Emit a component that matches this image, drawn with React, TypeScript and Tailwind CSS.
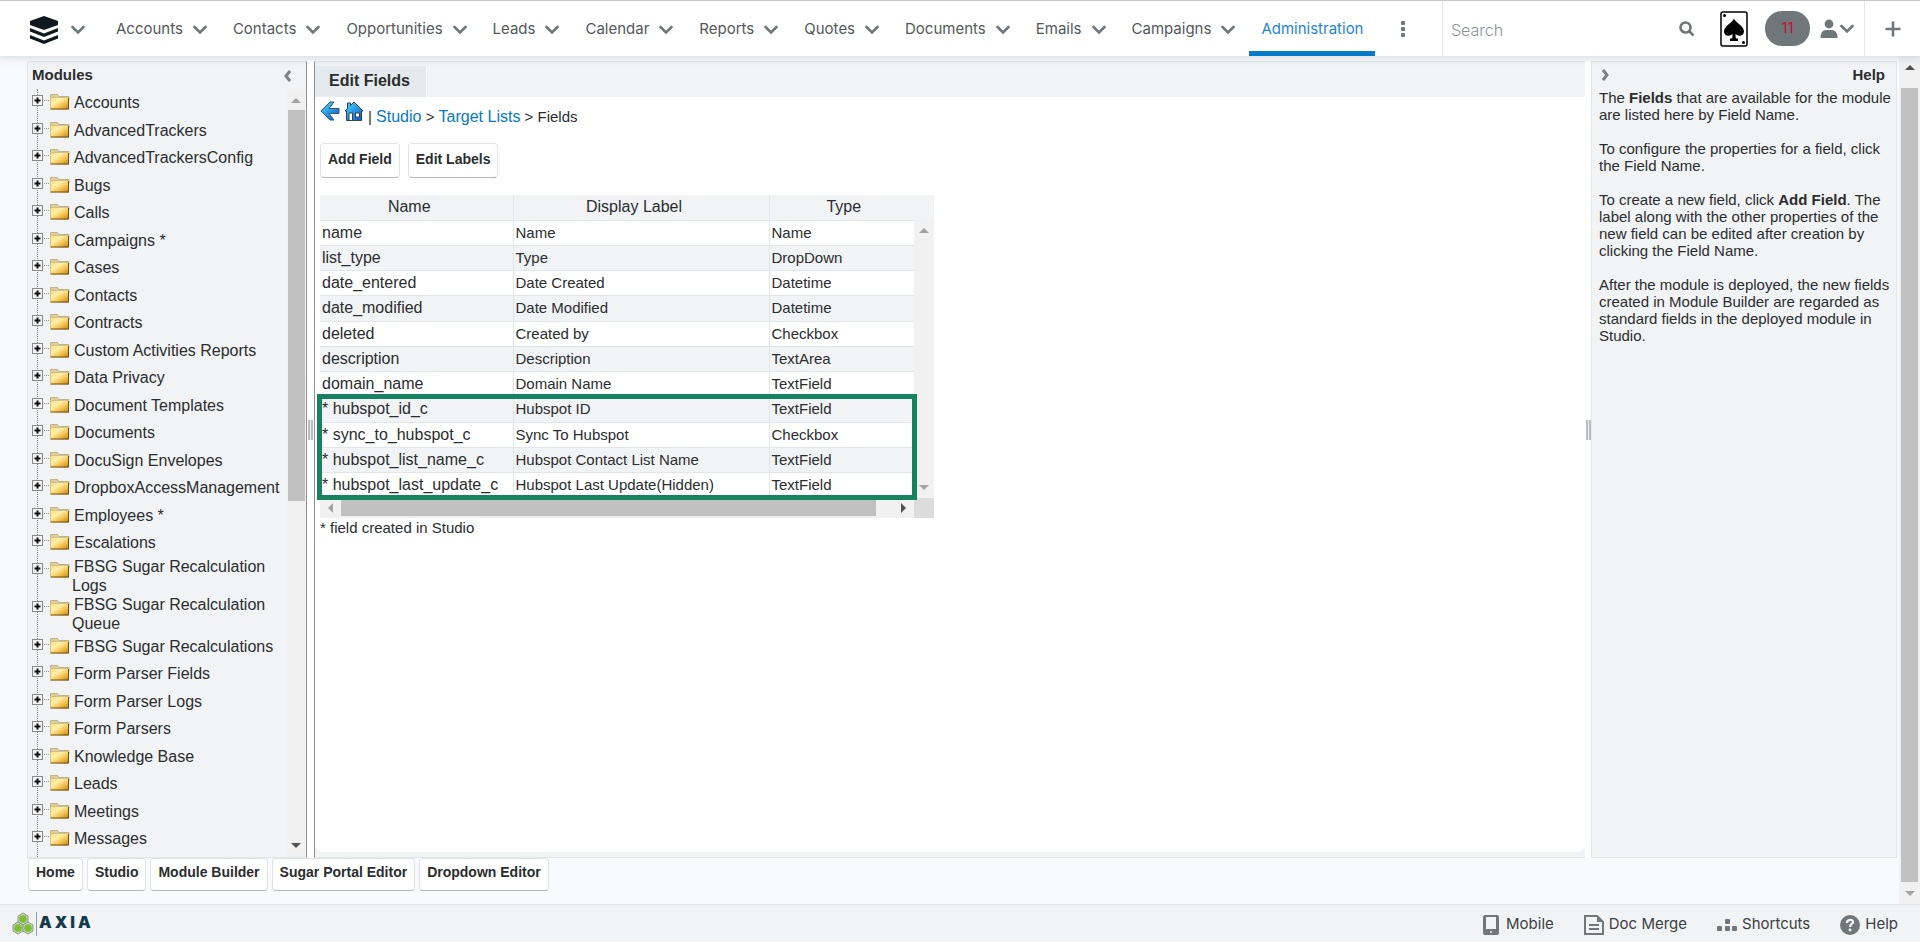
import React from 'react'

const navItems = [
  'Accounts',
  'Contacts',
  'Opportunities',
  'Leads',
  'Calendar',
  'Reports',
  'Quotes',
  'Documents',
  'Emails',
  'Campaigns',
]

const modules = [
  'Accounts',
  'AdvancedTrackers',
  'AdvancedTrackersConfig',
  'Bugs',
  'Calls',
  'Campaigns *',
  'Cases',
  'Contacts',
  'Contracts',
  'Custom Activities Reports',
  'Data Privacy',
  'Document Templates',
  'Documents',
  'DocuSign Envelopes',
  'DropboxAccessManagement',
  'Employees *',
  'Escalations',
  'FBSG Sugar Recalculation Logs',
  'FBSG Sugar Recalculation Queue',
  'FBSG Sugar Recalculations',
  'Form Parser Fields',
  'Form Parser Logs',
  'Form Parsers',
  'Knowledge Base',
  'Leads',
  'Meetings',
  'Messages',
]

// modules whose names take two lines in the tree
const longModules = ['FBSG Sugar Recalculation Logs', 'FBSG Sugar Recalculation Queue']

const fields = [
  ['name', 'Name', 'Name'],
  ['list_type', 'Type', 'DropDown'],
  ['date_entered', 'Date Created', 'Datetime'],
  ['date_modified', 'Date Modified', 'Datetime'],
  ['deleted', 'Created by', 'Checkbox'],
  ['description', 'Description', 'TextArea'],
  ['domain_name', 'Domain Name', 'TextField'],
  ['* hubspot_id_c', 'Hubspot ID', 'TextField'],
  ['* sync_to_hubspot_c', 'Sync To Hubspot', 'Checkbox'],
  ['* hubspot_list_name_c', 'Hubspot Contact List Name', 'TextField'],
  ['* hubspot_last_update_c', 'Hubspot Last Update(Hidden)', 'TextField'],
]

const bottomButtons = ['Home', 'Studio', 'Module Builder', 'Sugar Portal Editor', 'Dropdown Editor']

function Chevron() {
  return (
    <svg width="14" height="10" viewBox="0 0 14 10" fill="none" stroke="#6f777b" strokeWidth="2.6">
      <path d="M1.500 2l5.500 5.500L12.500 2" strokeLinecap="round" />
    </svg>
  )
}

function Arrow({ dir, color }: { dir: 'up' | 'down' | 'left' | 'right'; color: string }) {
  const paths = {
    up: 'M0 7l5-5 5 5z',
    down: 'M0 3l5 5 5-5z',
    left: 'M7 0l-5 5 5 5z',
    right: 'M3 0l5 5-5 5z',
  }
  return (
    <svg width="10" height="10" viewBox="0 0 10 10" fill={color} className="shrink-0">
      <path d={paths[dir]} />
    </svg>
  )
}

function Logo() {
  return (
    <svg width="30" height="28" viewBox="0 0 30 28" fill="#0f1a20">
      <path d="M15 0l14 5v4L15 14 1 9V5z" />
      <path d="M1 12l14 5.500L29 12v3.500L15 21 1 15.500z" />
      <path d="M1 19l14 5.500L29 19v3.500L15 28 1 22.500z" />
    </svg>
  )
}

function Header() {
  return (
    <header className="relative z-10 flex h-14 shrink-0 items-stretch border-t border-[#c8c8c8] bg-white font-['Inter',sans-serif] text-[15px] text-[#54585a] shadow-[0_2px_8px_rgba(80,110,125,0.22)]">
      <button type="button" aria-label="Modules menu" className="ml-[29px] flex w-[75px] items-center gap-3 pt-[2px]">
        <Logo />
        <Chevron />
      </button>
      <nav className="flex flex-1 items-stretch">
        {navItems.map((item) => (
          <button key={item} type="button" className="flex items-center gap-[10px] pt-[2px] pr-[14px] pl-3">
            {item}
            <Chevron />
          </button>
        ))}
        <a href="#" className="flex items-center border-b-[5px] border-[#0679c8] px-3 pt-[6px] text-[#1d86cf]">
          Administration
        </a>
        <button type="button" aria-label="More" className="ml-[23px] flex items-center">
          <svg width="10" height="18" viewBox="0 0 10 18" fill="#6f777b">
            <rect x="3" y="1" width="4" height="4" rx="1" />
            <rect x="3" y="7" width="4" height="4" rx="1" />
            <rect x="3" y="13" width="4" height="4" rx="1" />
          </svg>
        </button>
      </nav>
      <div className="flex w-[258px] items-center border-l border-[#e2e6e8] pr-1 pl-2">
        <input
          type="text"
          placeholder="Search"
          aria-label="Search"
          className="w-full min-w-0 flex-1 pt-[3px] text-[16px] font-light outline-none placeholder:text-[#8d9497]"
        />
        <svg width="18" height="18" viewBox="0 0 18 18" fill="none" stroke="#6f777b" strokeWidth="2.600" className="shrink-0">
          <circle cx="7.500" cy="7.500" r="5" />
          <path d="M11 11l4.500 4.500" />
        </svg>
      </div>
      <div className="flex items-center">
        <button type="button" aria-label="Spade" className="mr-[17px] ml-5">
          <svg width="28" height="36" viewBox="0 0 28 36">
            <rect x="1" y="1" width="26" height="34" rx="2" fill="#fff" stroke="#000" strokeWidth="1.500" />
            <path d="M14 7.500c1.500 4 10 7.500 10 13 0 4.500-5.500 5.500-8.500 2.500 0 3 .3 4 .5 4.500h2V30h-8v-2.500h2c.2-.5.500-1.500.500-4.500-3 3-8.500 2-8.500-2.500 0-5.500 8.500-9 10-13z" />
            <circle cx="4.500" cy="4.500" r="1.500" />
            <circle cx="23.500" cy="31.500" r="1.500" />
          </svg>
        </button>
        <button type="button" className="h-[35px] w-[45px] rounded-[17px] bg-[#6f777b] text-[#c8102e]">
          11
        </button>
        <button type="button" aria-label="Profile" className="ml-[10px] flex w-11 items-center gap-[2px]">
          <svg width="18" height="20" viewBox="0 0 18 20" fill="#6f777b">
            <circle cx="9" cy="5" r="4.400" />
            <path d="M0.500 19c0-5.500 2-7.500 5.500-8h6c3.500.5 5.500 2.500 5.500 8z" />
          </svg>
          <Chevron />
        </button>
      </div>
      <button type="button" aria-label="Create" className="flex w-14 items-center justify-center border-l border-[#e2e6e8]">
        <svg width="16" height="16" viewBox="0 0 16 16" stroke="#6f777b" strokeWidth="2.600">
          <path d="M8 0.500v15M0.500 8h15" />
        </svg>
      </button>
    </header>
  )
}

function TreeIcon() {
  return (
    <svg width="38" height="22" viewBox="0 0 38 22" className="shrink-0">
      <defs>
        <linearGradient id="folder" x1="0" y1="0" x2="1" y2="1">
          <stop offset="0" stopColor="#f8dc80" />
          <stop offset="0.35" stopColor="#fff0a8" />
          <stop offset="0.65" stopColor="#f2c04c" />
          <stop offset="1" stopColor="#c07f10" />
        </linearGradient>
      </defs>
      <path d="M12 11.500h6" stroke="#999" strokeDasharray="1 1" />
      <rect x="0.500" y="6.500" width="10" height="10" fill="#f4f4f4" stroke="#8a8a8a" />
      <path d="M2.500 11.500h6M5.500 8.500v6" stroke="#111" strokeWidth="2" />
      <path d="M18.500 5.500h7l1.500 2h10v3H18.500z" fill="#dccf9c" stroke="#b5a878" strokeWidth="0.800" />
      <path d="M18 8.500h19v12H18z" fill="url(#folder)" />
      <path d="M18.500 20h18V9" fill="none" stroke="#6e5218" />
      <path d="M18.500 20V8.500h18" fill="none" stroke="#c9b98a" strokeWidth="0.800" />
    </svg>
  )
}

function Sidebar() {
  return (
    <aside className="flex w-[280px] shrink-0 flex-col border border-[#e2e8ea] border-r-[#8f8f8f] bg-[#f1f3f5]">
      <div className="flex h-[27px] items-center justify-between pr-[15px] pl-1">
        <h2 className="text-[15px] font-bold">Modules</h2>
        <button type="button" aria-label="Collapse modules">
          <svg width="8" height="12" viewBox="0 0 8 12" fill="none" stroke="#808080" strokeWidth="3">
            <path d="M7 1L3 6l4 5" />
          </svg>
        </button>
      </div>
      <div className="flex min-h-0 flex-1">
        <ul className="relative min-w-0 flex-1 overflow-hidden pl-1 text-[16px] leading-[19px]">
          <li aria-hidden="true" className="absolute top-0 bottom-0 left-[9px] border-l border-dotted border-[#888]" />
          {modules.map((name) => (
            <li
              key={name}
              className={
                longModules.includes(name)
                  ? 'relative flex h-[38px] items-start gap-1'
                  : 'relative flex items-start gap-1 odd:h-[27px] even:h-7'
              }
            >
              <TreeIcon />
              <a href="#" className={longModules.includes(name) ? '-ml-[2px] w-[200px] indent-[2px]' : 'pt-1 whitespace-nowrap'}>
                {name}
              </a>
            </li>
          ))}
        </ul>
        <div className="flex w-5 shrink-0 flex-col items-center justify-between bg-[#f1f1f1] pb-[7px]">
          <div className="flex w-full flex-col items-center gap-1 pt-[7px]">
            <Arrow dir="up" color="#a3a3a3" />
            <div className="h-[391px] w-[17px] bg-[#c1c1c1]" />
          </div>
          <Arrow dir="down" color="#505050" />
        </div>
      </div>
    </aside>
  )
}

function Splitter() {
  return (
    <div className="flex w-[7px] shrink-0 items-start justify-center bg-white pt-[359px]">
      <div className="h-5 w-[5px] border-x-2 border-[#bdbdbd] bg-[#eee]" />
    </div>
  )
}

function FieldsTable() {
  return (
    <div className="relative w-[614px]">
      <div className="flex">
        <table className="w-[594px] table-fixed border-collapse text-left">
          <thead>
            <tr className="h-[25px] bg-[#f1f3f5] text-center text-[16px] leading-5">
              <th className="w-[193px] border-r border-b border-[#e2e8ea] pr-[14px] font-normal">Name</th>
              <th className="w-[256px] border-r border-b border-[#e2e8ea] pr-[14px] font-normal">Display Label</th>
              <th className="border-b border-[#e2e8ea] pl-1 font-normal">Type</th>
            </tr>
          </thead>
          <tbody>
            {fields.map(([name, label, type]) => (
              <tr key={name} className="h-[25px] border-b border-[#e2e8ea] leading-5 even:bg-[#f1f3f5] [&:nth-child(4n)]:h-[26px]">
                <td className="border-r border-[#e2e8ea] pl-[2px] text-[16px]">{name}</td>
                <td className="border-r border-[#e2e8ea] pl-[2px] text-[15px]">{label}</td>
                <td className="pl-[2px] text-[15px]">{type}</td>
              </tr>
            ))}
          </tbody>
        </table>
        <div className="flex w-5 flex-col">
          <div className="h-[25px] bg-[#f1f3f5]" />
          <div className="flex flex-1 flex-col items-center justify-between bg-[#f1f1f1] py-[6px]">
            <Arrow dir="up" color="#a3a3a3" />
            <Arrow dir="down" color="#a3a3a3" />
          </div>
        </div>
      </div>
      <div className="flex h-5 bg-[#f1f1f1]">
        <div className="flex w-[594px] items-center justify-between pr-[6px] pl-[6px]">
          <div className="flex items-center gap-[5px]">
            <Arrow dir="left" color="#a3a3a3" />
            <div className="h-[17px] w-[535px] bg-[#c1c1c1]" />
          </div>
          <Arrow dir="right" color="#505050" />
        </div>
        <div className="flex-1 bg-[#dcdcdc]" />
      </div>
      <div className="absolute top-[199px] -left-[3px] h-[106px] w-[600px] border-[5px] border-[#17835e]" />
    </div>
  )
}

function EditFields() {
  return (
    <main className="flex min-w-0 flex-1 flex-col border-t border-b border-l border-[#e2e8ea] border-l-[#8f8f8f] bg-[#f1f3f5] pb-[5px]">
      <div className="flex h-[35px] items-end">
        <h1 className="flex h-[31px] w-[112px] items-center border-r border-white bg-[#e4eaed] pb-[2px] pl-[14px] text-[16px] font-bold">
          Edit Fields
        </h1>
      </div>
      <div className="flex-1 rounded-b-lg bg-white px-[5px] pt-1 text-[15px]">
        <div className="flex h-7 items-start gap-1">
          <a href="#" aria-label="Back">
            <svg width="20" height="20" viewBox="0 0 20 20">
              <defs>
                <linearGradient id="blue" x1="0" y1="0" x2="1" y2="1">
                  <stop offset="0" stopColor="#3fe0ff" />
                  <stop offset="1" stopColor="#1450c8" />
                </linearGradient>
              </defs>
              <path d="M1 10l9-9h4l-5 6.500h10v5H9l5 6.500h-4z" fill="url(#blue)" stroke="#33566e" />
            </svg>
          </a>
          <a href="#" aria-label="Home">
            <svg width="20" height="20" viewBox="0 0 20 20">
              <path d="M1 10L3.500 7.500V2h3v2.500L10 1l9 9h-1.500v9.500h-15V10z" fill="url(#blue)" stroke="#33424e" />
              <path d="M5 12h3.500v7.500H5zM11.500 12h4v4h-4z" fill="#fff" stroke="#33424e" />
            </svg>
          </a>
          <p className="pt-[6px] leading-5">
            |{' '}
            <a href="#" className="text-[16px] text-[#0679c8]">
              Studio
            </a>{' '}
            &gt;{' '}
            <a href="#" className="text-[16px] text-[#0679c8]">
              Target Lists
            </a>{' '}
            &gt; Fields
          </p>
        </div>
        <div className="mt-[14px] flex gap-2">
          {['Add Field', 'Edit Labels'].map((label) => (
            <button
              key={label}
              type="button"
              className="h-[35px] rounded border border-[#dfe3e5] border-b-[#b8b8b8] bg-white px-[7px] pb-[2px] text-[14px] font-bold"
            >
              {label}
            </button>
          ))}
        </div>
        <div className="mt-[17px]">
          <FieldsTable />
        </div>
        <p className="leading-5">* field created in Studio</p>
      </div>
    </main>
  )
}

function HelpPanel() {
  return (
    <aside className="ml-[-1px] w-[306px] shrink-0 border border-[#e2e8ea] bg-[#f1f3f5] px-[7px] text-[15px] leading-[17px]">
      <div className="flex h-[27px] items-center justify-between pr-1 pb-[2px] pl-[3px]">
        <button type="button" aria-label="Collapse help">
          <svg width="8" height="12" viewBox="0 0 8 12" fill="none" stroke="#808080" strokeWidth="3">
            <path d="M1 1l4 5-4 5" />
          </svg>
        </button>
        <h2 className="font-bold">Help</h2>
      </div>
      <div className="-mr-1 flex flex-col gap-[17px]">
        <p>
          The <b>Fields</b> that are available for the module are listed here by Field Name.
        </p>
        <p>To configure the properties for a field, click the Field Name.</p>
        <p>
          To create a new field, click <b>Add Field</b>. The label along with the other properties of the new field can be
          edited after creation by clicking the Field Name.
        </p>
        <p>
          After the module is deployed, the new fields created in Module Builder are regarded as standard fields in the
          deployed module in Studio.
        </p>
      </div>
    </aside>
  )
}

function Hexagon({ x, y }: { x: number; y: number }) {
  return (
    <g transform={`translate(${x} ${y})`}>
      <path d="M0-6l5 3v6l-5 3-5-3v-6z" fill="#c9d3c4" stroke="#8c9a8c" />
      <circle r="3.800" fill="#7cc02c" />
    </g>
  )
}

function Footer() {
  return (
    <footer className="flex h-[38px] shrink-0 items-center justify-between border-t border-[#e2e6e8] bg-[#f1f3f5] pr-[22px] pl-3 font-['Inter',sans-serif] text-[15px] text-[#3c4042]">
      <div className="flex h-full items-start gap-[2px] pt-[7px]">
        <div className="flex border-r border-[#8ba0aa] pr-[2px]">
          <svg width="22" height="24" viewBox="0 0 22 24">
            <Hexagon x={11} y={7} />
            <Hexagon x={6} y={16} />
            <Hexagon x={16} y={16} />
          </svg>
        </div>
        <span className="text-[16px] leading-5 font-black tracking-[3px] text-[#123a4c]">AXIA</span>
      </div>
      <div className="flex items-center gap-[30px] pt-[2px]">
        <button type="button" className="flex items-center gap-[7px]">
          <svg width="16" height="20" viewBox="0 0 16 20">
            <rect width="16" height="20" rx="2" fill="#6f777b" />
            <path d="M3 2h10v12H3z" fill="#f1f3f5" />
            <circle cx="8" cy="17" r="1" fill="#f1f3f5" />
          </svg>
          Mobile
        </button>
        <button type="button" className="flex items-center gap-[5px]">
          <svg width="20" height="20" viewBox="0 0 20 20">
            <path d="M1 1h12l6 6v12H1z" fill="none" stroke="#6f777b" strokeWidth="2" />
            <path d="M13 1v6h6z" fill="#6f777b" />
            <path d="M5 10h10M5 14h10" stroke="#6f777b" strokeWidth="2" />
          </svg>
          Doc Merge
        </button>
        <button type="button" className="flex items-center gap-[5px]">
          <svg width="20" height="20" viewBox="0 0 20 20" fill="#6f777b">
            <rect x="8" y="4" width="5" height="5" rx="1" />
            <rect x="0" y="11" width="5" height="5" rx="1" />
            <rect x="8" y="11" width="5" height="5" rx="1" />
            <rect x="15" y="11" width="5" height="5" rx="1" />
          </svg>
          Shortcuts
        </button>
        <button type="button" className="flex items-center gap-[5px]">
          <svg width="20" height="20" viewBox="0 0 20 20">
            <circle cx="10" cy="10" r="10" fill="#6f777b" />
            <path d="M7 8c0-4 6-4 6-1 0 2-3 2-3 5" fill="none" stroke="#f1f3f5" strokeWidth="2.400" />
            <circle cx="10" cy="15" r="1.400" fill="#f1f3f5" />
          </svg>
          Help
        </button>
      </div>
    </footer>
  )
}

function App() {
  return (
    <div className="flex h-screen flex-col overflow-hidden bg-[#f9fafc] font-['Liberation_Sans',Arial,sans-serif] text-[#2b2d2e]">
      <Header />
      <div className="flex min-h-0 flex-1">
        <div className="flex min-w-0 flex-1 flex-col pt-[5px]">
          <div className="flex min-h-0 flex-1 pr-[2px] pl-[27px]">
            <Sidebar />
            <Splitter />
            <EditFields />
            <Splitter />
            <HelpPanel />
          </div>
          <div className="flex h-[46px] shrink-0 gap-1 pl-[28px]">
            {bottomButtons.map((label) => (
              <button
                key={label}
                type="button"
                className="h-[33px] rounded border border-[#dfe3e5] border-b-[#b8b8b8] bg-white px-[7px] pb-[5px] text-[14px] font-bold"
              >
                {label}
              </button>
            ))}
          </div>
        </div>
        <div className="flex w-[21px] shrink-0 flex-col items-center justify-between bg-[#f1f1f1] pt-[7px] pb-[6px]">
          <Arrow dir="up" color="#505050" />
          <div className="mt-[15px] mb-[6px] w-[17px] flex-1 bg-[#c1c1c1]" />
          <Arrow dir="down" color="#a3a3a3" />
        </div>
      </div>
      <Footer />
    </div>
  )
}

export default App
